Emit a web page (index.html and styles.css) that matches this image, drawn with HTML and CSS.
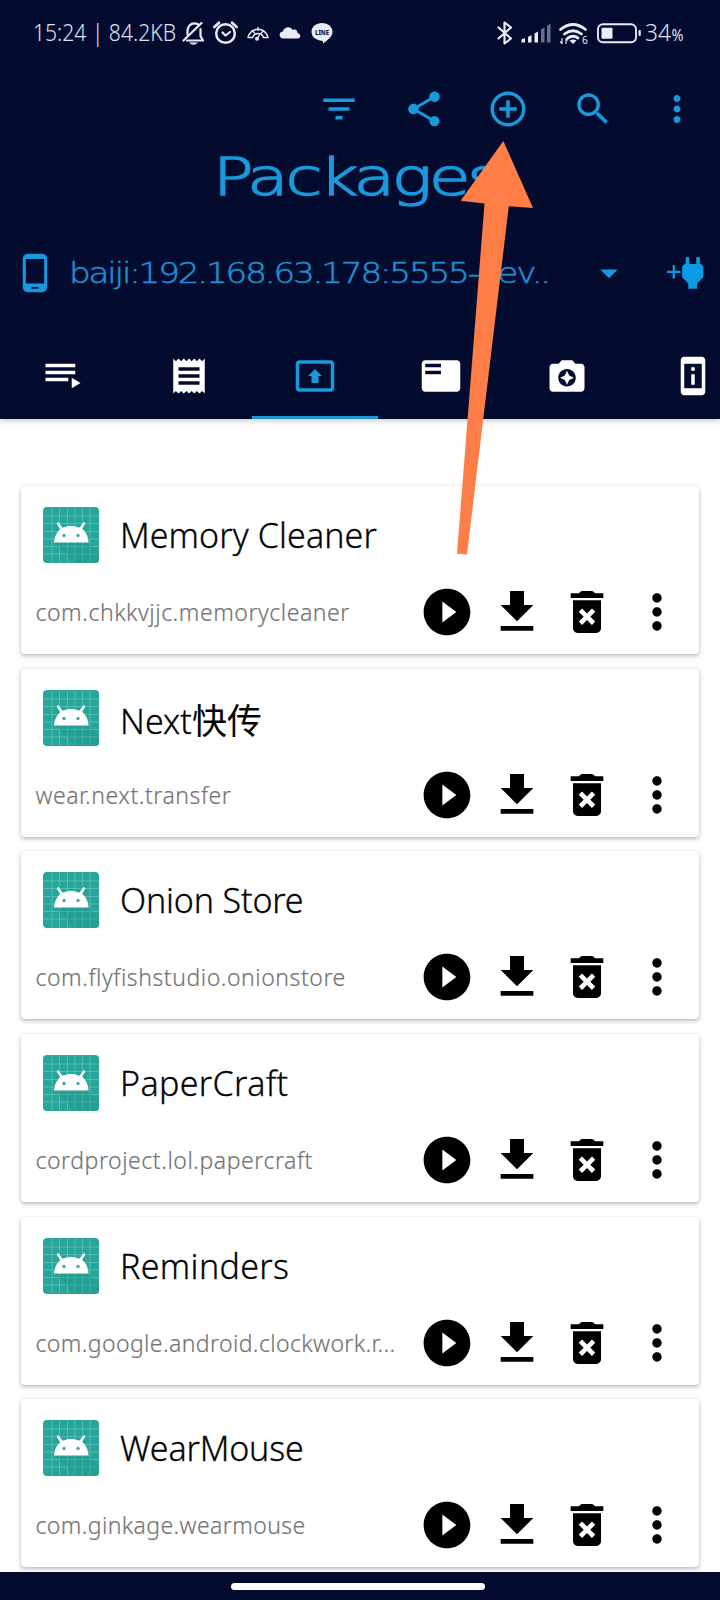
FILE: index.html
```html
<!DOCTYPE html>
<html lang="en">
<head>
<meta charset="utf-8">
<title>Packages</title>
<link rel="stylesheet" href="styles.css">
</head>
<body>
<svg class="defs" aria-hidden="true">
  <symbol id="more" viewBox="0 0 24 24"><path d="M12 8c1.1 0 2-.9 2-2s-.9-2-2-2-2 .9-2 2 .9 2 2 2zm0 2c-1.1 0-2 .9-2 2s.9 2 2 2 2-.9 2-2-.9-2-2-2zm0 6c-1.1 0-2 .9-2 2s.9 2 2 2 2-.9 2-2-.9-2-2-2z"/></symbol>
  <symbol id="play" viewBox="0 0 24 24"><path d="M12 2C6.48 2 2 6.48 2 12s4.480 10 10 10 10-4.480 10-10S17.520 2 12 2zm-2 14.500v-9l6 4.500-6 4.500z"/></symbol>
  <symbol id="download" viewBox="0 0 24 24"><path d="M19 9h-4V3H9v6H5l7 7 7-7zM5 18v2h14v-2H5z"/></symbol>
  <symbol id="trash" viewBox="0 0 24 24"><path d="M6 19c0 1.100.9 2 2 2h8c1.100 0 2-.9 2-2V7H6v12zm2.460-7.120l1.410-1.410L12 12.590l2.120-2.120 1.410 1.410L13.410 14l2.120 2.120-1.410 1.410L12 15.410l-2.120 2.120-1.410-1.410L10.590 14l-2.130-2.120zM15.500 4l-.7-.7q-.3-.3-.8-.3h-4q-.5 0-.8.3L8.500 4H5v2h14V4z"/></symbol>
  <symbol id="app" viewBox="0 0 56 56">
    <rect width="56" height="56" rx="4" fill="#26a69a"/>
    <path d="M9 0v56M16.500 0v56M24.500 0v56M32 0v56M39.500 0v56M47 0v56M0 9h56M0 16.500h56M0 24.500h56M0 32h56M0 39.500h56M0 47h56" stroke="#62bfb5" stroke-width=".8"/>
    <path d="M12 35.500h33L56 46v10H32z" fill="#168e83" opacity=".3"/>
    <path d="M11 35.500c.5-7 4-12.500 9-15l17 0c5 2.500 8 8 8.500 15z" fill="#fff"/>
    <path d="M19 21.500q9-5.500 18 0z" fill="#fff"/>
    <path d="M15 16.500l4.500 6.500M41 16.500l-4.500 6.500" stroke="#fff" stroke-width="2.400" stroke-linecap="round"/>
    <circle cx="21" cy="28.500" r="1.700" fill="#46aa9f"/><circle cx="35" cy="28.500" r="1.700" fill="#46aa9f"/>
  </symbol>
</svg>
<div class="screen">
  <header class="header">
    <div class="status">
      <svg class="status-art" viewBox="0 0 720 66">
        <g class="status-text">
          <text x="33" y="41" textLength="143" lengthAdjust="spacingAndGlyphs">15:24 | 84.2KB</text>
          <text x="645" y="41" textLength="26" lengthAdjust="spacingAndGlyphs">34</text>
          <text class="percent" x="671.500" y="41" textLength="12" lengthAdjust="spacingAndGlyphs">%</text>
        </g>
        <g fill="none" stroke="#e9ecf7" stroke-width="2.200" stroke-linecap="round" stroke-linejoin="round">
          <path d="M198 24.300q-5-2.300-8.500 1.200-2 2-2 6v3.500M200.500 29v7l2.500 4.500h-16"/>
          <path d="M201.500 23l-18 17.500"/>
          <circle cx="225.500" cy="33.500" r="9.300" stroke-width="2.500"/>
          <path d="M222.500 32.500l3 3 4.500-3.500"/>
          <path d="M214.300 27l4.700-4.300M236.700 27l-4.700-4.300" stroke-width="2.600"/>
          <path d="M248 37.500a10.200 10.200 0 0 1 20 0h-4.500a5.800 5.800 0 0 0-11 0z" stroke-width="1.500"/>
          <path d="M252.300 30.500l2.200 2.500M258 27.500v3M263.500 30.500l-2 2.500M257 39l3.200-5.500" stroke-width="1.300"/>
          <path d="M498.500 27.500l12.500 11-6.500 5V22.500l6.500 5-12.500 11"/>
        </g>
        <g fill="#e9ecf7">
          <path d="M189 42.500h9q-4.500 4.500-9 0z"/><circle cx="257" cy="38.800" r="2"/>
          <path d="M283.500 38.500c-5 0-5-7-.5-7 .5-5 8-6 9.500-1.500 3.500-1.500 5 1 5 3 4 1 3.500 5.500 0 5.500z"/>
          <path d="M322 23c6 0 10.500 4 10.500 8.700 0 5-5 8-9.500 12q.7-2.500-1-3c-6-.5-10.500-4-10.500-9S316 23 322 23z"/>
          <path d="M521.500 39.500l3.500-1.500v4.500h-3.500zM528 37l3.500-2v7.500H528zM534.500 33.500l3.500-2v11h-3.500z"/>
          <path d="M541 29.500l3.500-2v15H541zM547 26l3.500-2.500v19H547z" opacity=".45"/>
          <path d="M569.500 40.500q3.500-2 7 0l-3.500 3.500z"/>
          <rect x="601.500" y="27.700" width="11" height="11" rx="1"/><rect x="638.500" y="30" width="2.300" height="6" rx="1"/>
          <text class="line-badge" x="315" y="34.800" textLength="14" lengthAdjust="spacingAndGlyphs">LINE</text>
          <text class="wifi-gen" x="582" y="43.500">6</text>
        </g>
        <g fill="none" stroke="#e9ecf7" stroke-linecap="round">
          <path d="M560.500 29.500q12.500-10 25 0M564.500 34q8.500-6.500 17 0M568 38q5-3.500 10 0" stroke-width="2.800"/>
          <path d="M562 38.500v5M566 38.500v5M560.500 42l1.500 1.500M567.500 40l-1.500-1.500" stroke-width="1.200"/>
          <rect x="598" y="24.200" width="38" height="18" rx="5" stroke-width="1.900"/>
        </g>
      </svg>
    </div>
    <nav class="actions">
      <svg class="icon" viewBox="0 0 24 24"><path d="M10 18h4v-2h-4v2zM3 6v2h18V6H3zm3 7h12v-2H6v2z"/></svg>
      <svg class="icon" viewBox="0 0 24 24"><path d="M18 16.080c-.76 0-1.440.3-1.960.77L8.910 12.700c.05-.23.09-.46.09-.7s-.04-.47-.09-.7l7.050-4.110c.54.5 1.250.81 2.040.81 1.660 0 3-1.340 3-3s-1.340-3-3-3-3 1.340-3 3c0 .24.04.47.09.7L8.040 9.810C7.500 9.310 6.790 9 6 9c-1.660 0-3 1.340-3 3s1.340 3 3 3c.79 0 1.500-.31 2.040-.81l7.120 4.160c-.05.21-.08.43-.08.65 0 1.610 1.310 2.920 2.920 2.920s2.920-1.310 2.920-2.920-1.310-2.920-2.920-2.920z"/></svg>
      <svg class="icon" viewBox="0 0 24 24"><path d="M13 7h-2v4H7v2h4v4h2v-4h4v-2h-4V7zm-1-5C6.480 2 2 6.480 2 12s4.480 10 10 10 10-4.480 10-10S17.520 2 12 2zm0 18c-4.410 0-8-3.590-8-8s3.590-8 8-8 8 3.590 8 8-3.590 8-8 8z"/></svg>
      <svg class="icon" viewBox="0 0 24 24"><path d="M15.500 14h-.79l-.28-.27C15.410 12.590 16 11.110 16 9.500 16 5.910 13.090 3 9.500 3S3 5.910 3 9.500 5.910 16 9.500 16c1.610 0 3.090-.59 4.230-1.570l.27.28v.79l5 4.990L20.490 19l-4.990-5zm-6 0C7.010 14 5 11.990 5 9.500S7.010 5 9.500 5 14 7.010 14 9.500 11.990 14 9.500 14z"/></svg>
      <svg class="icon"><use href="#more"/></svg>
    </nav>
    <svg class="title" viewBox="0 0 720 70"><text x="213" y="45" textLength="286" lengthAdjust="spacingAndGlyphs">Packages</text></svg>
    <div class="device">
      <svg class="icon" viewBox="0 0 24 24"><path d="M16 1H8C6.340 1 5 2.340 5 4v16c0 1.660 1.340 3 3 3h8c1.660 0 3-1.340 3-3V4c0-1.660-1.340-3-3-3zm-2 20h-4v-1h4v1zm3.250-3H6.750V4h10.500v14z"/></svg>
      <svg class="device-name" viewBox="0 0 490 60"><text x="-1" y="40" textLength="480" lengthAdjust="spacingAndGlyphs">baiji:192.168.63.178:5555-dev..</text></svg>
      <svg class="icon caret" viewBox="0 0 24 24"><path d="M7 10l5 5 5-5z"/></svg>
      <svg class="plug" viewBox="0 0 42 42"><path d="M3.100 18.700h5.600V13h2.200v5.700h5.600v2.200h-5.600v5.700H8.700v-5.700H3.100z"/><path transform="translate(7.500 -.3) scale(1.770)" d="M16.010 7L16 3h-2v4h-4V3H8v4h-.01C7 6.990 6 7.990 6 8.990v5.490L9.500 18v3h5v-3l3.500-3.510v-5.500c0-1-1-2-1.990-1.990z"/></svg>
    </div>
    <div class="tabs">
      <span class="tab"><svg class="icon" viewBox="0 0 24 24"><path d="M19 9H2v2h17V9zm0-4H2v2h17V5zM2 15h13v-2H2v2zm15-2v6l5-3-5-3z"/></svg></span>
      <span class="tab"><svg class="icon" viewBox="0 0 24 24"><path d="M18 17H6v-2h12v2zm0-4H6v-2h12v2zm0-4H6V7h12v2zM3 22l1.500-1.500L6 22l1.500-1.500L9 22l1.500-1.500L12 22l1.500-1.500L15 22l1.500-1.500L18 22l1.500-1.500L21 22V2l-1.500 1.500L18 2l-1.500 1.500L15 2l-1.500 1.500L12 2l-1.500 1.500L9 2 7.500 3.500 6 2 4.500 3.500 3 2v20z"/></svg></span>
      <span class="tab active"><svg class="icon" viewBox="0 0 24 24"><path d="M21 3H3c-1.110 0-2 .89-2 2v14c0 1.110.89 2 2 2h18c1.110 0 2-.89 2-2V5c0-1.110-.89-2-2-2zm0 16.020H3V4.980h18v14.040zM10 12H8l4-4 4 4h-2v4h-4v-4z"/></svg></span>
      <span class="tab"><svg class="icon" viewBox="0 0 24 24"><path d="M21 3H3c-1.100 0-2 .9-2 2v14c0 1.100.9 2 2 2h18c1.100 0 2-.9 2-2V5c0-1.100-.9-2-2-2zm-9 8H3V9h9v2zm0-4H3V5h9v2z"/></svg></span>
      <span class="tab"><svg class="icon" viewBox="0 0 24 24"><path d="M9 3L7.170 5H4c-1.100 0-2 .9-2 2v12c0 1.100.9 2 2 2h16c1.100 0 2-.9 2-2V7c0-1.100-.9-2-2-2h-3.170L15 3H9zm3 15c-2.760 0-5-2.240-5-5s2.240-5 5-5 5 2.240 5 5-2.240 5-5 5zm0-1l1.250-2.750L16 13l-2.750-1.250L12 9l-1.250 2.750L8 13l2.750 1.250z"/></svg></span>
      <span class="tab"><svg class="icon" viewBox="0 0 24 24"><path d="M13 7h-2v2h2V7zm0 4h-2v6h2v-6zm4-9.990L7 1c-1.100 0-2 .9-2 2v18c0 1.100.9 2 2 2h10c1.100 0 2-.9 2-2V3c0-1.100-.9-1.990-2-1.990zM17 19H7V5h10v14z"/></svg></span>
    </div>
  </header>
  <main class="list">
    <article class="card"><div class="head"><svg class="app-icon"><use href="#app"/></svg><h2>Memory Cleaner</h2></div><div class="foot"><p>com.chkkvjjc.memorycleaner</p><svg><use href="#play"/></svg><svg><use href="#download"/></svg><svg><use href="#trash"/></svg><svg><use href="#more"/></svg></div></article>
    <article class="card"><div class="head"><svg class="app-icon"><use href="#app"/></svg><h2 class="mixed">Next<span class="cjk" lang="zh">快传</span></h2></div><div class="foot"><p>wear.next.transfer</p><svg><use href="#play"/></svg><svg><use href="#download"/></svg><svg><use href="#trash"/></svg><svg><use href="#more"/></svg></div></article>
    <article class="card"><div class="head"><svg class="app-icon"><use href="#app"/></svg><h2 class="snug">Onion Store</h2></div><div class="foot"><p>com.flyfishstudio.onionstore</p><svg><use href="#play"/></svg><svg><use href="#download"/></svg><svg><use href="#trash"/></svg><svg><use href="#more"/></svg></div></article>
    <article class="card"><div class="head"><svg class="app-icon"><use href="#app"/></svg><h2 class="airy">PaperCraft</h2></div><div class="foot"><p>cordproject.lol.papercraft</p><svg><use href="#play"/></svg><svg><use href="#download"/></svg><svg><use href="#trash"/></svg><svg><use href="#more"/></svg></div></article>
    <article class="card"><div class="head"><svg class="app-icon"><use href="#app"/></svg><h2 class="airy">Reminders</h2></div><div class="foot"><p class="snug-id">com.google.android.clockwork.r...</p><svg><use href="#play"/></svg><svg><use href="#download"/></svg><svg><use href="#trash"/></svg><svg><use href="#more"/></svg></div></article>
    <article class="card"><div class="head"><svg class="app-icon"><use href="#app"/></svg><h2 class="snug">WearMouse</h2></div><div class="foot"><p class="snug-id">com.ginkage.wearmouse</p><svg><use href="#play"/></svg><svg><use href="#download"/></svg><svg><use href="#trash"/></svg><svg><use href="#more"/></svg></div></article>
  </main>
  <footer class="gesture"><span class="pill"></span></footer>
  <svg class="pointer" viewBox="0 0 720 1600"><path d="M503.300 141L533 208l-24.200-1.800L467 554.500l-10-.7 27.500-350.300-23.900-2.700z"/></svg>
</div>
</body>
</html>
```
FILE: styles.css
```css
* { box-sizing: border-box; }
body { margin: 0; background: #fefefe; font-family: "Noto Sans", "Noto Sans CJK SC", sans-serif; }
svg { display: block; flex: none; }
.defs { position: absolute; width: 0; height: 0; }
.screen { position: relative; display: flex; flex-direction: column; width: 720px; height: 1600px; overflow: hidden; }

.header { height: 418.500px; flex: none; background: #030c2f; box-shadow: 0 1px 6px rgba(0, 0, 0, .25); }
.status { height: 66px; }
.status-art { width: 720px; height: 66px; }
.status-text { fill: #dfe3f2; font-size: 24px; font-weight: 300; }
.percent { font-size: 17px; font-weight: 400; }
.line-badge { fill: #030c2f; font-size: 7px; font-weight: 800; }
.wifi-gen { font-size: 10px; }

.icon { width: 42px; height: 42px; fill: #1899db; }
.actions { display: flex; justify-content: flex-end; gap: 42.500px; height: 84px; padding: 21.500px 22px 0 0; }
.title { width: 720px; height: 70px; overflow: visible; }
.title text { fill: #1899db; stroke: #1899db; stroke-width: 1.500px; font: 200 52px "DejaVu Sans", sans-serif; letter-spacing: -2.500px; }
.device { display: flex; align-items: center; height: 106px; padding: 0 0 0 14px; }
.device-name { width: 490px; height: 60px; margin-left: 13.500px; overflow: visible; }
.device-name text { fill: #1f8fd0; stroke: #1f8fd0; stroke-width: .5px; font: 200 28px "DejaVu Sans", sans-serif; letter-spacing: -1.800px; }
.caret { margin-left: 28px; }
.plug { width: 42px; height: 42px; margin-left: 34px; fill: #0a9ce2; }
.tabs { display: flex; width: 756px; height: 92.500px; }
.tab { display: flex; flex: none; justify-content: center; width: 126px; padding-top: 29px; }
.tab .icon { fill: #fff; }
.tab.active { border-bottom: 3.500px solid #2193d3; }
.tab.active .icon { fill: #1899db; }

.list { display: flex; flex: 1; flex-direction: column; gap: 14.660px; min-height: 0; padding: 67.500px 21.500px 0 21px; }
.card { flex: none; height: 168px; padding-left: 14.500px; border-radius: 4px; background: #fff; box-shadow: 0 2px 4px rgba(0, 0, 0, .25), 0 0 2px rgba(0, 0, 0, .1); }
.head { display: flex; align-items: center; height: 98px; padding: 0 0 0 7px; }
.app-icon { width: 56px; height: 56px; }
.head h2 { margin: 0 0 0 21.500px; color: #050505; font-size: 34px; font-weight: 300; line-height: 56px; letter-spacing: .1px; white-space: nowrap; -webkit-text-stroke: .3px #050505; }
.head .mixed { padding-top: 6px; }
.head .snug { letter-spacing: -.150px; }
.head .airy { letter-spacing: .350px; }
.cjk { font-size: 35px; font-weight: 400; letter-spacing: 0; -webkit-text-stroke: 0; }
.foot { display: flex; align-items: center; height: 56px; }
.foot p { width: 383.200px; margin: 0; color: #757575; font-size: 23px; font-weight: 300; letter-spacing: .55px; white-space: nowrap; -webkit-text-stroke: .2px #757575; }
.foot .snug-id { letter-spacing: .4px; }
.foot svg { width: 56px; height: 56px; margin-right: 14px; fill: #000; }

.gesture { display: flex; flex: none; justify-content: center; height: 28px; padding-top: 11px; background: #030c2f; }
.pill { width: 254px; height: 6.500px; margin-right: 4px; border-radius: 4px; background: #fff; }
.pointer { position: absolute; inset: 0; width: 720px; height: 1600px; fill: #ff7d47; pointer-events: none; }
```
